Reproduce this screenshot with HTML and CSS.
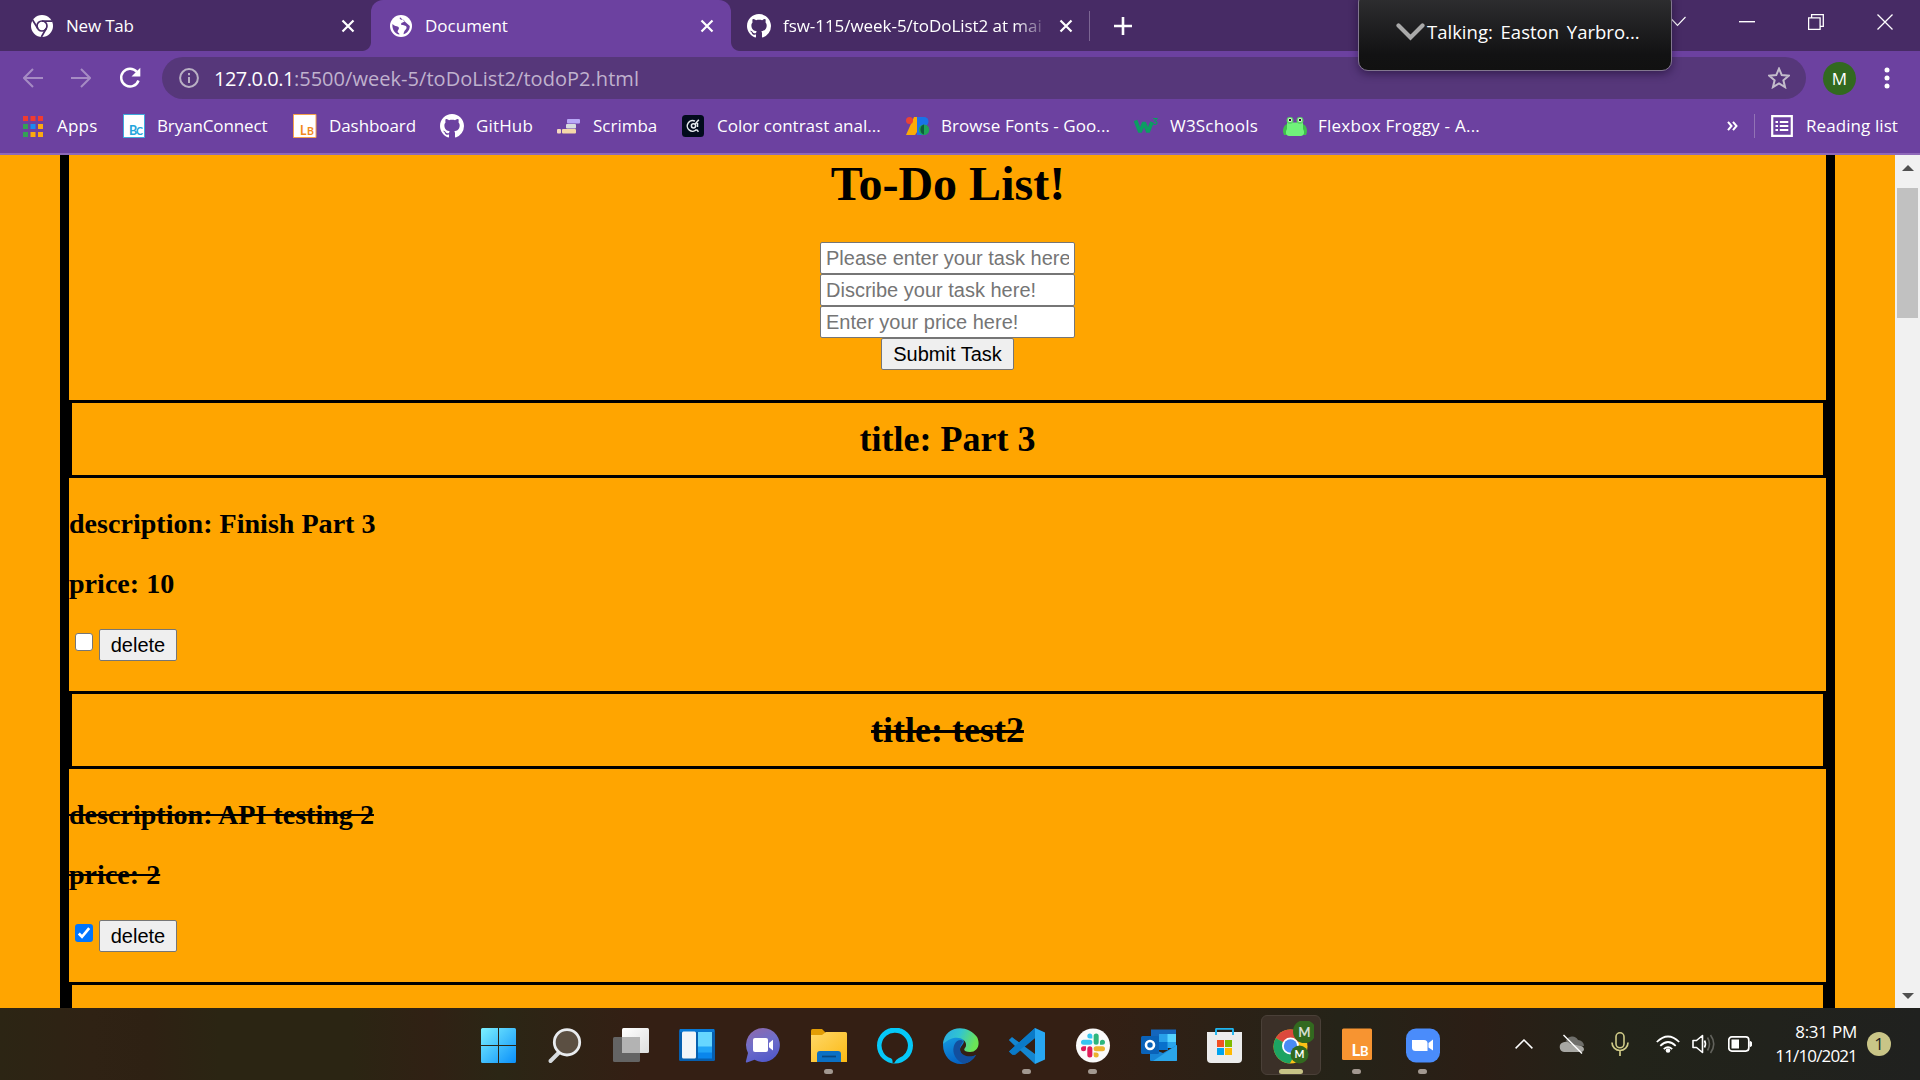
FILE: index.html
```html
<!DOCTYPE html>
<html lang="en">
<head>
<meta charset="utf-8">
<title>Document</title>
<link rel="stylesheet" href="styles.css">
</head>
<body>
<svg class="defs" width="0" height="0">
  <defs>
    <symbol id="octocat" viewBox="0 0 16 16"><path d="M8 0C3.58 0 0 3.58 0 8c0 3.54 2.29 6.53 5.47 7.59.4.07.55-.17.55-.38 0-.19-.01-.82-.01-1.49-2.01.37-2.53-.49-2.69-.94-.09-.23-.48-.94-.82-1.13-.28-.15-.68-.52-.01-.53.63-.01 1.08.58 1.23.82.72 1.21 1.87.87 2.33.66.07-.52.28-.87.51-1.07-1.78-.2-3.64-.89-3.64-3.95 0-.87.31-1.59.82-2.15-.08-.2-.36-1.02.08-2.12 0 0 .67-.21 2.2.82.64-.18 1.32-.27 2-.27s1.36.09 2 .27c1.53-1.04 2.2-.82 2.2-.82.44 1.1.16 1.92.08 2.12.51.56.82 1.27.82 2.15 0 3.07-1.87 3.75-3.65 3.95.29.25.54.73.54 1.48 0 1.07-.01 1.93-.01 2.2 0 .21.15.46.55.38A8.01 8.01 0 0 0 16 8c0-4.42-3.58-8-8-8z" fill="#fff"/></symbol>
    <symbol id="cross" viewBox="0 0 14 14"><path d="M1.5 1.5l11 11M12.5 1.5l-11 11" stroke="#fff" stroke-width="2.2" fill="none"/></symbol>
  </defs>
</svg>

<header class="browser">
  <div class="tabstrip">
    <div class="tab tab-first">
      <svg width="22" height="22" viewBox="0 0 22 22"><circle cx="11" cy="11" r="11" fill="#fff"/><circle cx="11" cy="11" r="5" fill="none" stroke="#472b65" stroke-width="1.7"/><path d="M11 6.1h10M6.8 13.5L1.6 5M15.2 13.5L10.4 22" stroke="#472b65" stroke-width="1.7"/></svg>
      <span class="ui t-newtab">New Tab</span>
      <svg class="close" width="14" height="14"><use href="#cross"/></svg>
    </div>
    <div class="tab tab-active">
      <svg width="22" height="22" viewBox="0 0 22 22"><circle cx="11" cy="11" r="11" fill="#fff"/><path d="M10 2.2c-1 2 1 2.500 3 2.600 1.600.2 1.800 1.700.6 2.300-1.300.7-2.600.8-2.500 2.200.1 1.200 2.300.8 4 1.400 2.200.800 1.600 2.900.4 4.100-1 1-1.700 2.200-2 4.400 4-1 6.300-4.500 6.300-8.200M2.400 9c2.200 2.300 4 1.800 5.700 2.800 1.700 1.100.4 3-.3 4-.6.900.2 1.900 1.400 2.600l.3 1.200C5 19 2 15 2.400 9z" fill="#6c41a0"/></svg>
      <span class="ui">Document</span>
      <svg class="close" width="14" height="14"><use href="#cross"/></svg>
    </div>
    <div class="tab tab-github">
      <svg width="24" height="24"><use href="#octocat"/></svg>
      <span class="ui t-fsw">fsw-115/week-5/toDoList2 at mai</span>
      <svg class="close" width="14" height="14"><use href="#cross"/></svg>
    </div>
    <div class="tabdivider"></div>
    <div class="newtab"><svg width="18" height="18" viewBox="0 0 18 18"><path d="M9 0v18M0 9h18" stroke="#fff" stroke-width="2.600"/></svg></div>
    <div class="winbuttons">
      <svg width="17" height="11" viewBox="0 0 17 11"><path d="M.5 1l8 8.500 8-8.500" fill="none" stroke="#fff" stroke-width="1.100"/></svg>
      <svg width="16" height="2"><rect width="16" height="1.400" fill="#fff"/></svg>
      <svg width="16" height="16" viewBox="0 0 16 16"><path d="M.6 3.800h11.500v11.500H.6zM3.600 3.800V.7h11.700v11.700h-3.200" fill="none" stroke="#fff" stroke-width="1.300"/></svg>
      <svg width="16" height="16" viewBox="0 0 16 16"><path d="M.5.5l15 15M15.500.5l-15 15" stroke="#fff" stroke-width="1.300"/></svg>
    </div>
  </div>

  <div class="toolbar">
    <svg class="nav" width="20" height="20" viewBox="0 0 20 20"><path d="M20 10H1.500M10 1L1 10l9 9" fill="none" stroke="#a68bc4" stroke-width="2"/></svg>
    <svg class="nav" width="20" height="20" viewBox="0 0 20 20"><path d="M0 10h18.500M10 1l9 9-9 9" fill="none" stroke="#a68bc4" stroke-width="2"/></svg>
    <svg class="nav" width="22" height="22" viewBox="0 0 22 22"><path d="M17.800 4.800A8.900 8.900 0 1 0 19.500 13.500" fill="none" stroke="#fff" stroke-width="2.500"/><path d="M21.300.8v8.800h-8.800z" fill="#fff"/></svg>
    <div class="omnibox">
      <svg width="20" height="20" viewBox="0 0 20 20"><circle cx="10" cy="10" r="8.900" fill="none" stroke="#b9b0c4" stroke-width="2"/><path d="M10 9v6M10 5v2.200" stroke="#b9b0c4" stroke-width="2"/></svg>
      <div class="ui url"><span class="t-host">127.0.0.1</span><span class="t-path">:5500/week-5/toDoList2/todoP2.html</span></div>
      <svg class="star" width="22" height="22" viewBox="0 0 24 24"><path d="M12 1.800l3 7 7.600.7-5.800 5 1.800 7.500-6.600-4-6.600 4 1.800-7.500-5.800-5L9 8.800z" fill="none" stroke="#c3bccb" stroke-width="2.200"/></svg>
    </div>
    <div class="ui avatar">M</div>
    <svg width="6" height="22" viewBox="0 0 6 22"><g fill="#fff"><circle cx="3" cy="3" r="2.500"/><circle cx="3" cy="11" r="2.500"/><circle cx="3" cy="19" r="2.500"/></g></svg>
  </div>

  <nav class="bookmarks">
    <div class="bm bm-apps">
      <svg width="20" height="21" viewBox="0 0 20 21"><g fill="#f23b2f"><path d="M0 0h5v5H0zM7.500 0h5v5h-5zM15 0h5v5h-5z"/></g><path d="M0 8h5v5H0zM0 16h5v5H0z" fill="#34a056"/><path d="M7.500 8h5v5h-5z" fill="#1a8cf0"/><path d="M15 8h5v5h-5zM7.500 16h5v5h-5zM15 16h5v5h-5z" fill="#fba910"/></svg>
      <span class="ui t-apps">Apps</span>
    </div>
    <div class="bm bm-bryan">
      <svg width="22" height="24" viewBox="0 0 22 24"><path d="M.5.5h21v23H.5z" fill="#fff" stroke="#3fa9dc"/><text class="mark" x="6" y="20.500" font-size="12.500" fill="#23a5dc" textLength="14">B<tspan font-size="10.500">C</tspan></text></svg>
      <span class="ui t-bryan">BryanConnect</span>
    </div>
    <div class="bm bm-dash">
      <svg width="24" height="24" viewBox="0 0 24 24"><path d="M.5.5h22.500v23H.5z" fill="#fff" stroke="#f5a14b"/><text class="mark" x="7" y="20.500" font-size="12.500" fill="#f28a1b" textLength="14">L<tspan font-size="10.500">B</tspan></text></svg>
      <span class="ui t-dash">Dashboard</span>
    </div>
    <div class="bm bm-github">
      <svg width="24" height="24"><use href="#octocat"/></svg>
      <span class="ui t-github">GitHub</span>
    </div>
    <div class="bm bm-scrimba">
      <svg width="24" height="16" viewBox="0 0 24 16"><rect x="10" y="1" width="13" height="4.500" rx="1" fill="#b9a8f8"/><rect x="9" y="6" width="10" height="4.500" rx="1" fill="#d8dcdf"/><rect x="5" y="11" width="14" height="4.500" rx="1" fill="#f5d8a8"/><rect x="0" y="11" width="4" height="4.500" rx="1" fill="#f5d8c0"/></svg>
      <span class="ui">Scrimba</span>
    </div>
    <div class="bm bm-color">
      <svg width="22" height="22" viewBox="0 0 22 22"><rect width="22" height="22" rx="3.500" fill="#020b1c"/><g fill="none" stroke="#e8edf0" stroke-width="1.500"><path d="M13 6.200A5.300 5.300 0 1 0 14.500 14.500"/><circle cx="11.500" cy="10.800" r="2.100"/><path d="M13 9.300l3.800-4.500M14.500 14.500l2 2.200M15.500 8v4"/></g></svg>
      <span class="ui">Color contrast anal...</span>
    </div>
    <div class="bm bm-fonts">
      <svg width="24" height="18" viewBox="0 0 24 18"><path d="M8 0h5v12L9 18H0z" fill="#fbab07"/><circle cx="3.500" cy="3.500" r="3.500" fill="#ea4335"/><path d="M11 0h7v18h-7z" fill="#1e73e8"/><circle cx="18" cy="4.500" r="4.500" fill="#1a73e8"/><circle cx="18" cy="12.700" r="5.300" fill="#1fa357"/><path d="M18 7.500v10a5.300 5.300 0 0 1 0-10z" fill="#0d5c3d"/></svg>
      <span class="ui t-fonts">Browse Fonts - Goo...</span>
    </div>
    <div class="bm bm-w3">
      <svg width="24" height="18" viewBox="0 0 24 18"><path d="M1.500 3.500L6 15l4-9.500L14 15l4-10" fill="none" stroke="#0c9d62" stroke-width="3.800" stroke-linejoin="bevel"/><path d="M19 1.500h4L20.800 4c3 0 2.800 3.800-.3 3.500l-1.500-.7" fill="none" stroke="#0c9d62" stroke-width="1.200"/></svg>
      <span class="ui t-w3">W3Schools</span>
    </div>
    <div class="bm bm-frog">
      <svg width="24" height="19" viewBox="0 0 24 19"><path d="M4 7c-4 2-5 7-3 11h22c2-4 1-9-3-11z" fill="#3fc04c"/><path d="M4 5.500h16V12c2 3 1 7-2 7H6c-3 0-4-4-2-7z" fill="#70f27a"/><circle cx="7" cy="3.500" r="3.400" fill="#5ad864"/><circle cx="17" cy="3.500" r="3.400" fill="#5ad864"/><circle cx="7" cy="3" r="2.100" fill="#fff"/><circle cx="17" cy="3" r="2.100" fill="#fff"/><circle cx="7" cy="3" r="1.300" fill="#222"/><circle cx="17" cy="3" r="1.300" fill="#222"/></svg>
      <span class="ui t-frog">Flexbox Froggy - A...</span>
    </div>
    <div class="more"><svg width="11" height="10" viewBox="0 0 11 10"><path d="M1 .8L4.500 5 1 9.200M6 .8L9.500 5 6 9.200" fill="none" stroke="#fff" stroke-width="2"/></svg></div>
    <div class="reading">
      <svg width="22" height="22" viewBox="0 0 22 22"><path d="M1.200 1.200h19.600v19.600H1.200z" fill="none" stroke="#fff" stroke-width="2.200"/><path d="M4.500 7H7M4.500 11H7M4.500 15H7M8.800 7h8.500M8.800 11h8.500M8.800 15h8.500" stroke="#fff" stroke-width="2"/></svg>
      <span class="ui t-reading">Reading list</span>
    </div>
  </nav>
</header>

<aside class="talking">
  <svg width="29" height="18" viewBox="0 0 29 18"><path d="M2.500 2.500l12 12 12-12" fill="none" stroke="#a9a9a9" stroke-width="4.200" stroke-linecap="round"/></svg>
  <span class="ui">Talking: Easton Yarbro...</span>
</aside>

<main class="viewport">
  <div class="document">
    <div class="list">
      <h1>To-Do List!</h1>
      <form class="entry">
        <input class="field" type="text" placeholder="Please enter your task here!">
        <input class="field" type="text" placeholder="Discribe your task here!">
        <input class="field" type="text" placeholder="Enter your price here!">
        <button class="btn submit" type="button">Submit Task</button>
      </form>
      <section class="todo">
        <h2>title: Part 3</h2>
        <h3>description: Finish Part 3</h3>
        <h3>price: 10</h3>
        <div class="actions"><span class="check"></span><button class="btn delete" type="button">delete</button></div>
      </section>
      <section class="todo done">
        <h2>title: test2</h2>
        <h3>description: API testing 2</h3>
        <h3>price: 2</h3>
        <div class="actions"><span class="check checked"><svg width="18" height="18" viewBox="0 0 18 18"><path d="M3.800 9.500l3.200 3.300 7.200-8.600" fill="none" stroke="#fff" stroke-width="2.700"/></svg></span><button class="btn delete" type="button">delete</button></div>
      </section>
      <section class="todo"><h2></h2></section>
    </div>
  </div>
  <div class="scrollbar">
    <svg width="12" height="6" viewBox="0 0 12 6"><path d="M6 0l6 6H0z" fill="#505050"/></svg>
    <div class="thumb"></div>
    <svg width="12" height="6" viewBox="0 0 12 6"><path d="M0 0h12L6 6z" fill="#505050"/></svg>
  </div>
</main>

<footer class="taskbar">
  <div class="apps">
    <div class="app"><svg width="36" height="36" viewBox="0 0 36 36"><defs><linearGradient id="win" x1="0" y1="0" x2="35" y2="35" gradientUnits="userSpaceOnUse"><stop offset="0" stop-color="#7cf1ff"/><stop offset="1" stop-color="#0a90fa"/></linearGradient></defs><path d="M1.500 0H17v17H0V1.500Q0 0 1.500 0zM18 0h15.500Q35 0 35 1.500V17H18zM0 18h17v17H1.500Q0 35 0 33.500zM18 18h17v15.500q0 1.500-1.500 1.500H18z" fill="url(#win)"/></svg></div>
    <div class="app"><svg width="36" height="36" viewBox="0 0 36 36"><path d="M3.500 33l9-9" stroke="#d5dadd" stroke-width="4" stroke-linecap="round"/><circle cx="20" cy="14.300" r="12.700" fill="#5b4f42" stroke="#e9ecef" stroke-width="2.800"/></svg></div>
    <div class="app"><svg width="36" height="36" viewBox="0 0 36 36"><defs><linearGradient id="tv" x2="1" y2="1"><stop stop-color="#fff"/><stop offset="1" stop-color="#dedede"/></linearGradient></defs><rect y="9" width="27" height="25" rx="1.500" fill="#646464"/><rect x="9" width="27" height="25" rx="1.500" fill="url(#tv)"/><path d="M9 9h18v16H9z" fill="#b3b3b3"/></svg></div>
    <div class="app"><svg width="36" height="36" viewBox="0 0 36 36"><rect y="1" width="36" height="32" rx="1.500" fill="#075faf"/><path d="M1 1h34v3H1z" fill="#0878d4"/><rect x="3" y="3.500" width="14" height="27" rx="1.500" fill="#f3f5f8"/><path d="M19 4h14v15H19z" fill="#67d6ff"/><path d="M19 18.500h14V25H19z" fill="#22a5f7"/><path d="M19 24.500h14v6H19z" fill="#0a86ec"/></svg></div>
    <div class="app"><svg width="36" height="36" viewBox="0 0 36 36"><defs><linearGradient id="chat" x1=".2" y1="0" x2=".6" y2="1"><stop stop-color="#8d69ad"/><stop offset=".45" stop-color="#706ec9"/><stop offset="1" stop-color="#5158c9"/></linearGradient></defs><path d="M18 0a17 17 0 1 1-8.500 31.800L2 34.500Q.5 34.500 1 33l2-8A17 17 0 0 1 18 0z" fill="url(#chat)"/><rect x="8" y="10" width="15" height="14" rx="2" fill="#fff"/><path d="M24 15l4-3.300v10.800l-4-3.300z" fill="#fff"/></svg></div>
    <div class="app running"><svg width="36" height="36" viewBox="0 0 36 36"><defs><linearGradient id="fold" x2="1" y2="1"><stop stop-color="#ffd868"/><stop offset="1" stop-color="#fbb914"/></linearGradient></defs><path d="M0 2.500Q0 1 1.500 1H11l4 4v5H0z" fill="#e29d05"/><path d="M0 7h11l4-3h19.500Q36 4 36 5.500V34H0z" fill="url(#fold)"/><path d="M6 34V26q0-3 3-3h18q3 0 3 3v8z" fill="#0b70c4"/><path d="M11 28.500h14" stroke="#09477f" stroke-width="1.700"/></svg></div>
    <div class="app"><svg width="36" height="36" viewBox="0 0 36 36"><path d="M18 -.5a18 18 0 1 0 0 36 18 18 0 1 0 0-36zm0 5.200a13 13 0 0 1 3.500 25.500q-2.500 1-4.300 4.800l-1.700-.300q.5-3.300-1.500-4.500A13 13 0 0 1 18 4.700z" fill="#05c8f8" fill-rule="evenodd"/></svg></div>
    <div class="app"><svg width="36" height="36" viewBox="0 0 36 36"><defs><linearGradient id="ed1" x1="0" x2="1" y2=".3"><stop stop-color="#28a8e8"/><stop offset=".5" stop-color="#32c5d0"/><stop offset="1" stop-color="#6be456"/></linearGradient><linearGradient id="ed2" x2=".4" y2="1"><stop stop-color="#159ee2"/><stop offset="1" stop-color="#0562c4"/></linearGradient></defs><path d="M0 17C0 6 14 4 20 11c3 5-3 6-3 11 1 8 10 9 16 5-3 5-8 9-15 9C8 36 0 28 0 17z" fill="url(#ed2)"/><path d="M13 14c-6 8-1 19 8 21.500 5-.5 9-4 12-8.500-6 3-16 1-16-6 0-4 3-6 3-8-2-2-5-1-7 1z" fill="#124f9e"/><path d="M0 16C1-2 24-5 34 9c4 8 0 15-7 15-5 0-7-2-5-4C27 13 14 3 0 16z" fill="url(#ed1)"/></svg></div>
    <div class="app running"><svg width="36" height="36" viewBox="0 0 36 36"><path d="M0 12l3-3 7 5.500L26 0v10L6 27l-3-.5-3-3L6 18z" fill="#0d74c0"/><path d="M3 9.500L0 12l26 24V26z" fill="#1486d0"/><path d="M0 23.500L26 0v10L4 27z" fill="#0a7ac8"/><path d="M26 0l10 4.500v27L26 36z" fill="#28a7f2"/></svg></div>
    <div class="app running"><svg width="36" height="36" viewBox="0 0 36 36"><defs><path id="lobe" d="M5.042 15.165a2.520 2.520 0 1 1-2.520-2.520h2.520zM6.313 15.165a2.520 2.520 0 0 1 5.042 0v6.313a2.520 2.520 0 0 1-5.042 0z"/></defs><circle cx="18" cy="17.500" r="17" fill="#fafafa"/><g transform="translate(6 5.500)"><use href="#lobe" fill="#e01e5a"/><use href="#lobe" fill="#36c5f0" transform="rotate(90 12 12)"/><use href="#lobe" fill="#2eb67d" transform="rotate(180 12 12)"/><use href="#lobe" fill="#ecb22e" transform="rotate(270 12 12)"/></g></svg></div>
    <div class="app"><svg width="36" height="36" viewBox="0 0 36 36"><path d="M10 1.500h25V18H10z" fill="#1466bd"/><path d="M18 6h9v8h-9z" fill="#28a0ea"/><path d="M26.500 6H35v8h-8.500z" fill="#55d3ff"/><path d="M18 14h9v8h-9z" fill="#0870cc"/><path d="M26.500 14H35v6h-8.500z" fill="#2aa5ec"/><path d="M9 20l13 5 14-8v15q0 1-1 1H10q-1 0-1-1z" fill="#1683d4"/><path d="M36 17v15q0 1-1 1H12z" fill="#2ba6ea"/><rect x="0" y="8" width="18" height="18" rx="1.500" fill="#0a62b8"/><circle cx="9" cy="17" r="4" fill="none" stroke="#fff" stroke-width="2.600"/></svg></div>
    <div class="app"><svg width="36" height="36" viewBox="0 0 36 36"><path d="M9 5V1.500Q9 .8 10 .8h15q1 0 1 .8V5" fill="none" stroke="#1fb5f0" stroke-width="1.900"/><path d="M0 4h35v27q0 4-4 4H4q-4 0-4-4z" fill="#ececec"/><path d="M9 4v3M26 4v3" stroke="#1fb5f0" stroke-width="1.900"/><path d="M10 12h7v7h-7z" fill="#f25022"/><path d="M18 12h7v7h-7z" fill="#7fba00"/><path d="M10 20h7v7h-7z" fill="#00a4ef"/><path d="M18 20h7v7h-7z" fill="#ffb900"/></svg></div>
    <div class="app running active"><svg width="44" height="44" viewBox="0 0 44 44"><g transform="translate(3 8)"><circle cx="17.500" cy="17.500" r="17" fill="#fbc116"/><path d="M17.500 17.500L2.800 9A17 17 0 0 1 32.200 9z" fill="#dc4a3d"/><path d="M17.500 17.500L2.800 9a17 17 0 0 0 14 25.500l7-12z" fill="#1da362"/><circle cx="17.500" cy="17" r="8.500" fill="#fff"/><circle cx="17.500" cy="17" r="6.700" fill="#4a8af4"/></g><circle cx="34.500" cy="10.500" r="11.500" fill="#32691f"/><text class="mark" x="34.500" y="15.500" font-size="13" text-anchor="middle" fill="#d6dfd2">M</text><circle cx="29.500" cy="33.500" r="9" fill="#32691f"/><text class="mark" x="29.500" y="37.300" font-size="10.500" text-anchor="middle" fill="#fff">M</text></svg></div>
    <div class="app running"><svg width="36" height="36" viewBox="0 0 36 36"><rect x="3" y=".5" width="30" height="31.500" rx="1.500" fill="#f79431"/><text class="mark" x="12.500" y="27.500" font-size="17" fill="#fff" textLength="17">L<tspan font-size="13">B</tspan></text></svg></div>
    <div class="app running"><svg width="36" height="36" viewBox="0 0 36 36"><rect x="1" y=".5" width="34" height="34" rx="10" fill="#4a8cfb"/><path d="M7 12h12q3.500 0 3.500 3.500V23h-12Q7 23 7 19.500z" fill="#fff"/><path d="M23.500 15l4.500-3.500v11L23.500 19.500z" fill="#fff"/></svg></div>
  </div>
  <div class="tray">
    <svg width="18" height="10" viewBox="0 0 18 10"><path d="M.6 9.400L9 1l8.400 8.400" fill="none" stroke="#fff" stroke-width="1.500"/></svg>
    <svg class="cloud" width="26" height="22" viewBox="0 0 26 22"><path d="M7 8a6.500 6.500 0 0 1 12-1 6 6 0 0 1 6 6L10 12z" fill="#6f6f6b"/><path d="M5 19a5 5 0 0 1-.5-9.800q4-1.200 7 1.800L20 12.500q5 .5 5 4-.5 2.500-3.500 2.500z" fill="#a7a7a3"/><path d="M4.500 2L23 20.500" stroke="#fff" stroke-width="1.500"/></svg>
    <svg class="mic" width="18" height="24" viewBox="0 0 18 24"><rect x="5" y=".8" width="8" height="15" rx="4" fill="none" stroke="#d0cb88" stroke-width="1.600"/><path d="M1 10.500a8 8 0 0 0 16 0M9 18.500V24" fill="none" stroke="#d0cb88" stroke-width="1.700"/></svg>
    <svg class="wifi" width="24" height="18" viewBox="0 0 24 18"><g fill="none" stroke="#fff" stroke-width="1.700"><path d="M.8 7q11.200-11 22.400 0M4.300 10.800q7.700-7.600 15.400 0M7.800 14.200q4.200-4.200 8.400 0"/></g><circle cx="12" cy="15.500" r="2.300" fill="#fff"/></svg>
    <svg class="vol" width="24" height="22" viewBox="0 0 24 22"><path d="M1 7.500h3.500l6-5v17l-6-5H1z" fill="none" stroke="#fff" stroke-width="1.600" stroke-linejoin="round"/><path d="M12.500 7.500q2 3.500 0 7" fill="none" stroke="#fff" stroke-width="1.600"/><path d="M15.500 4.500q4 6.500 0 13M18.500 2q6.500 9 0 18" fill="none" stroke="#62625c" stroke-width="1.600"/></svg>
    <svg class="batt" width="24" height="16" viewBox="0 0 24 16"><rect x=".8" y=".9" width="20" height="14.200" rx="3" fill="none" stroke="#fff" stroke-width="1.700"/><rect x="3.500" y="3.500" width="7.500" height="9" fill="#fff"/><path d="M22 5.500l2 1v3l-2 1z" fill="#fff" stroke="#fff"/></svg>
    <div class="ui clock"><span class="t-time">8:31 PM</span><span class="t-date">11/10/2021</span></div>
    <div class="ui badge">1</div>
  </div>
</footer>
</body>
</html>
```
FILE: styles.css
```css
* { box-sizing: border-box; }
body {
  margin: 0;
  width: 1920px;
  height: 1080px;
  overflow: hidden;
  display: flex;
  flex-direction: column;
  background: #ffa500;
}
svg { display: block; flex: none; }
.defs { position: absolute; }
.ui { font-family: "Open Sans", "Noto Sans", sans-serif; font-size: 17px; color: #fff; white-space: nowrap; line-height: 24px; }
.mark { font-family: "Lato", sans-serif; font-weight: 700; }

.browser { height: 155px; flex: none; background: #6c41a0; border-bottom: 2px solid #8f69b9; }
.tabstrip { height: 51px; display: flex; background: #472b65; }
.tab { display: flex; align-items: center; height: 51px; }
.tab .close { margin-left: auto; }
.tab-first { width: 371px; padding: 0 16px 0 31px; gap: 13px; background: radial-gradient(circle at 0 0, #472b65 8.5px, #6c41a0 9.5px) right bottom / 9px 9px no-repeat; }
.tab-active { width: 360px; padding: 0 17px 0 19px; gap: 13px; background: #6c41a0; border-radius: 12px 12px 0 0; }
.tab-github { width: 358px; padding: 0 16px; gap: 12px; background: radial-gradient(circle at 100% 0, #472b65 8.5px, #6c41a0 9.5px) left bottom / 9px 9px no-repeat; }
.t-fsw { width: 266px; letter-spacing: -.05px; -webkit-mask-image: linear-gradient(90deg, #000 232px, transparent 266px); mask-image: linear-gradient(90deg, #000 232px, transparent 266px); }
.t-newtab { letter-spacing: -.2px; }
.tabdivider { width: 1px; height: 30px; margin-top: 11px; background: #7c6693; }
.newtab { padding: 17px 0 0 24px; }
.winbuttons { flex: 1; display: flex; justify-content: flex-end; align-items: center; gap: 53px; padding: 0 27px 8px 0; }

.toolbar { height: 54px; display: flex; align-items: center; padding-left: 23px; }
.nav { margin-right: 28px; }
.nav:nth-child(3) { margin-right: 21px; }
.omnibox { width: 1644px; height: 42px; border-radius: 21px; background: #56377a; display: flex; align-items: center; padding: 0 16px 0 17px; gap: 15px; }
.url { font-size: 20px; color: #c0b2ce; padding-top: 1px; letter-spacing: .04px; }
.t-host { color: #fff; letter-spacing: -.5px; }
.star { margin-left: auto; }
.avatar { width: 33px; height: 33px; margin: 0 28px 0 17px; border-radius: 50%; background: #32691f; text-align: center; line-height: 33px; }

.bookmarks { height: 42px; display: flex; align-items: center; padding-left: 23px; }
.bm { display: flex; align-items: center; gap: 12px; flex: none; }
.bm-apps { width: 100px; gap: 14px; }
.bm-bryan { width: 170px; }
.bm-dash { width: 147px; }
.bm-github { width: 117px; }
.bm-scrimba { width: 125px; }
.bm-color { width: 224px; gap: 13px; }
.bm-fonts { width: 228px; gap: 11px; }
.bm-w3 { width: 149px; }
.bm-frog { width: 444px; gap: 11px; }
.t-apps { letter-spacing: .2px; }
.t-bryan { letter-spacing: -.12px; }
.t-dash { letter-spacing: -.08px; }
.t-github { letter-spacing: .15px; }
.t-fonts { letter-spacing: .07px; }
.t-w3 { letter-spacing: .2px; }
.t-frog { letter-spacing: .25px; }
.t-reading { letter-spacing: .08px; }
.more { width: 27px; }
.reading { display: flex; align-items: center; gap: 13px; padding-left: 16px; height: 24px; border-left: 1px solid #9273b5; }

.talking { position: absolute; left: 1358px; top: -8px; width: 314px; height: 79px; padding-left: 37px; display: flex; align-items: center; gap: 2px; border: 1px solid #82778f; border-radius: 10px; background: linear-gradient(#303032, #121213 80%, #111); box-shadow: 0 3px 9px rgba(20, 5, 40, .5); }
.talking .ui { font-size: 18.5px; word-spacing: 3px; }

.viewport { height: 853px; flex: none; display: flex; overflow: hidden; }
.document { width: 1895px; padding: 0 60px; background: #ffa500; overflow: hidden; }
.list { height: 1000px; border: solid #000; border-width: 0 9px; font-family: "Liberation Serif", "Times New Roman", serif; color: #000; }
h1, h2, h3 { margin: 0; font-weight: 700; }
h1 { font-size: 48px; line-height: 57px; padding-left: 1px; text-align: center; }
.entry { margin-top: 30px; display: flex; flex-direction: column; align-items: center; }
.field, .btn { height: 32px; margin: 0; border: 1px solid #767676; border-radius: 2px; font: 20px "Liberation Sans", Arial, sans-serif; }
.field { width: 255px; padding: 0 5px; background: #fff; }
.field::placeholder { color: #757575; opacity: 1; }
.btn { padding: 0; background: #efefef; color: #000; }
.submit { width: 133px; }
.todo { margin-top: 30px; }
h2 { height: 78px; border: 3px solid #000; font-size: 36px; line-height: 72px; text-align: center; }
h3 { margin-top: 28px; font-size: 28.080px; line-height: 32px; }
h2 + h3 { margin-top: 30px; }
.actions { display: flex; height: 32px; margin-top: 29px; padding-left: 6px; gap: 6px; }
.check { width: 18px; height: 18px; margin-top: 4px; background: #fff; border: 1px solid #767676; border-radius: 3px; }
.checked { border: 0; background: #0075ff; }
.delete { width: 78px; }
.done h2, .done h3 { text-decoration: line-through; }

.scrollbar { width: 25px; background: #f1f1f1; display: flex; flex-direction: column; align-items: center; padding: 10px 0 9px; }
.thumb { width: 21px; height: 130px; margin-top: 17px; background: #c1c1c1; }
.thumb + svg { margin-top: auto; }

.taskbar { height: 72px; flex: none; display: flex; background: linear-gradient(90deg, #2c2514 0, #2f2214 90px, #2e2113 150px, #2b2513 220px, #2b2513 350px, #302114 430px, #2b2615 500px, #341f14 640px, #341f14 1080px, #252318 1340px, #2b1e15 1480px, #222319 1620px, #20211f 1920px); }
.apps { display: flex; width: 990px; margin-left: 465px; flex: none; }
.app { position: relative; width: 66px; padding: 20px 15px 0 16px; }
.running::after { content: ""; position: absolute; left: 29px; top: 61px; width: 9px; height: 5px; border-radius: 3px; background: #a29890; }
.active { width: 60px; height: 60px; margin: 7px 2px 0 4px; padding: 5px 8px; border-radius: 6px; border: 1px solid #4a4038; background: #3b3028; }
.active::after { left: 17px; top: 53px; width: 24px; background: #c7c386; }
.tray { display: flex; align-items: center; padding-left: 60px; }
.cloud { margin-left: 26px; }
.mic { margin-left: 26px; }
.wifi { margin-left: 27px; }
.vol { margin-left: 12px; }
.batt { margin-left: 12px; }
.clock { width: 105px; display: flex; flex-direction: column; align-items: flex-end; }
.t-time { letter-spacing: -.25px; }
.t-date { letter-spacing: -.85px; }
.badge { width: 24px; height: 24px; margin-left: 10px; border-radius: 50%; background: #c9c587; color: #222; text-align: center; }
```
